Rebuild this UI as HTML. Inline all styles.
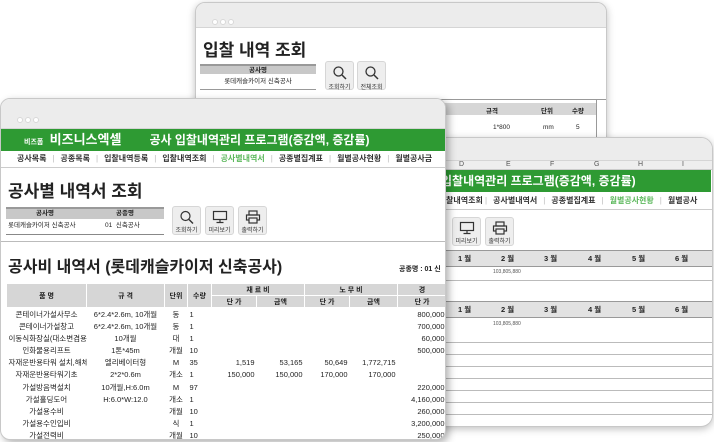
<!DOCTYPE html>
<html><head><meta charset="utf-8"><style>
*{margin:0;padding:0;box-sizing:border-box}
body{width:714px;height:442px;background:#fff;position:relative;overflow:hidden;font-family:"Liberation Sans","Noto Sans CJK KR",sans-serif;color:#222}
.win{position:absolute;background:#fff;border:1px solid #c8c8c8;border-radius:10px;overflow:hidden;box-shadow:0 2px 8px rgba(0,0,0,.25)}
.tb{position:absolute;left:0;right:0;top:0;background:#ececec;border-bottom:1px solid #d5d5d5}
.dots{position:absolute;left:16px;top:9px}
.dots i{display:inline-block;width:6px;height:6px;border-radius:50%;background:#fff;border:1px solid #d8d8d8;margin-right:2px}
.abs{position:absolute}
.green{position:absolute;background:#2e9a33;color:#fff;font-weight:bold;white-space:nowrap}
.nav{position:absolute;font-size:8px;font-weight:bold;color:#333;white-space:nowrap;border-bottom:1px solid #ccc}
.nav span{margin:0 6px}
.nav b{color:#bbb;font-weight:normal}
.btn{position:absolute;width:29px;height:29px;background:#eee;border:1px solid #d6d6d6;border-radius:3px;font-size:6px;text-align:center;color:#333}
.btn svg{display:block;margin:3px auto 1px}
table{border-collapse:collapse;table-layout:fixed}
td{font-size:7.5px;white-space:nowrap;overflow:hidden;height:12.2px;padding:0 2px}
.h td{background:#d6d6d6;font-weight:bold;text-align:center;font-size:7px;border:1px solid #fff}
.r{text-align:right}.c{text-align:center}
</style></head><body>

<!-- Window A (back) -->
<div class="win" style="left:195px;top:2px;width:412px;height:150px">
 <div class="tb" style="height:25px"><div class="dots"><i></i><i></i><i></i></div></div>
 <div class="abs" style="left:7px;top:33px;font-size:17px;font-weight:bold">입찰 내역 조회</div>
 <div class="abs" style="left:4px;top:61px;width:116px;height:10px;background:#c8c8c8;border-top:2px solid #999;font-size:6.5px;font-weight:bold;text-align:center;line-height:9px">공사명</div>
 <div class="abs" style="left:4px;top:73px;width:116px;height:14px;border-bottom:1px solid #999;font-size:6.5px;text-align:center;line-height:12px">롯데캐슬카이저 신축공사</div>
 <div class="btn" style="left:129px;top:58px"><svg width="16" height="16" viewBox="0 0 16 16"><circle cx="6.5" cy="6.5" r="4.5" fill="none" stroke="#333" stroke-width="1.3"/><path d="M10 10l4 4" stroke="#333" stroke-width="1.5"/></svg>조회하기</div>
 <div class="btn" style="left:161px;top:58px"><svg width="16" height="16" viewBox="0 0 16 16"><circle cx="6.5" cy="6.5" r="4.5" fill="none" stroke="#333" stroke-width="1.3"/><path d="M10 10l4 4" stroke="#333" stroke-width="1.5"/></svg>전체조회</div>
 <div class="abs" style="left:0;top:96px;width:412px;height:1px;background:#999"></div>
 <div class="abs" style="left:0;top:100px;width:400px;height:12px;background:#d6d6d6"></div>
 <div class="abs" style="left:290px;top:102px;font-size:6.5px;font-weight:bold">규격</div>
 <div class="abs" style="left:345px;top:102px;font-size:6.5px;font-weight:bold">단위</div>
 <div class="abs" style="left:376px;top:102px;font-size:6.5px;font-weight:bold">수량</div>
 <div class="abs" style="left:297px;top:121px;font-size:6.5px">1*800</div>
 <div class="abs" style="left:347px;top:121px;font-size:6.5px">mm</div>
 <div class="abs" style="left:380px;top:121px;font-size:6.5px">5</div>
 <div class="abs" style="left:400px;top:96px;width:1px;height:60px;background:#999"></div>
</div>

<!-- Window C (right) -->
<div class="win" style="left:400px;top:137px;width:313px;height:290px;border-radius:0 12px 12px 0">
 <div class="tb" style="height:23px"></div>
 <div class="abs" style="left:0;top:23px;width:313px;height:9px;background:#eee;border-bottom:1px solid #ccc;font-size:7px;color:#555">
  <span class="abs" style="left:58px">D</span><span class="abs" style="left:105px">E</span><span class="abs" style="left:149px">F</span><span class="abs" style="left:193px">G</span><span class="abs" style="left:237px">H</span><span class="abs" style="left:281px">I</span></div>
 <div class="green" style="left:0;top:32px;width:310px;height:22px;font-size:12px;line-height:22px;padding-left:40px">입찰내역관리 프로그램(증감액, 증감률)</div>
 <div class="nav" style="left:0;top:54px;width:313px;height:18px;line-height:17px;padding-left:45px">찰내역조회 <b>|</b><span>공사별내역서</span><b>|</b><span>공종별집계표</span><b>|</b><span style="color:#5cb85c">월별공사현황</span><b>|</b><span>월별공사</span></div>
 <div class="btn" style="left:51px;top:79px"><svg width="16" height="14" viewBox="0 0 16 14"><rect x="1.5" y="1.5" width="13" height="8" fill="none" stroke="#333" stroke-width="1.2"/><path d="M8 9.5v3M4.5 12.5h7" stroke="#333" stroke-width="1.2"/></svg>미리보기</div>
 <div class="btn" style="left:84px;top:79px"><svg width="16" height="14" viewBox="0 0 16 14"><rect x="4" y="1" width="8" height="4" fill="none" stroke="#333" stroke-width="1.2"/><rect x="1.5" y="5" width="13" height="5" fill="none" stroke="#333" stroke-width="1.2"/><rect x="4" y="8" width="8" height="5" fill="#eee" stroke="#333" stroke-width="1.2"/></svg>출력하기</div>
 <div class="abs" style="left:0;top:112px;width:313px;height:1px;background:#999"></div>
 <div class="abs" style="left:0;top:113px;width:313px;height:16px;background:#e2e2e2;border-bottom:1px solid #999;font-size:7.5px;font-weight:bold;line-height:15px">
  <span class="abs" style="left:57px">1 월</span><span class="abs" style="left:100px">2 월</span><span class="abs" style="left:143px">3 월</span><span class="abs" style="left:187px">4 월</span><span class="abs" style="left:231px">5 월</span><span class="abs" style="left:274px">6 월</span></div>
 <div class="abs" style="left:92px;top:131px;font-size:5px;color:#555">103,805,880</div>
 <div class="abs" style="left:0;top:142px;width:313px;height:1px;background:#bbb"></div>
 <div class="abs" style="left:0;top:163px;width:313px;height:1px;background:#999"></div>
 <div class="abs" style="left:0;top:164px;width:313px;height:16px;background:#e2e2e2;border-bottom:1px solid #999;font-size:7.5px;font-weight:bold;line-height:15px">
  <span class="abs" style="left:57px">1 월</span><span class="abs" style="left:100px">2 월</span><span class="abs" style="left:143px">3 월</span><span class="abs" style="left:187px">4 월</span><span class="abs" style="left:231px">5 월</span><span class="abs" style="left:274px">6 월</span></div>
 <div class="abs" style="left:92px;top:183px;font-size:5px;color:#555">103,805,880</div>
 <div class="abs" style="left:0;top:193px;width:313px;height:92px;background:repeating-linear-gradient(#fff 0,#fff 11px,#bbb 11px,#bbb 12px)"></div>
</div>

<!-- Window B (front) -->
<div class="win" style="left:0;top:98px;width:446px;height:342px;box-shadow:3px 3px 8px rgba(0,0,0,.3)">
 <div class="tb" style="height:30px"><div class="dots" style="top:11px"><i></i><i></i><i></i></div></div>
 <div class="green" style="left:0;top:30px;width:446px;height:22px;line-height:22px;font-size:12px"><span style="font-size:7px;margin-left:23px">비즈폼</span> <span style="font-size:13px;margin-left:3px">비즈니스엑셀</span><span style="margin-left:28px">공사 입찰내역관리 프로그램(증감액, 증감률)</span></div>
 <div class="nav" style="left:0;top:52px;width:446px;height:17px;line-height:16px;padding-left:10px"><span>공사목록</span><b>|</b><span>공종목록</span><b>|</b><span>입찰내역등록</span><b>|</b><span>입찰내역조회</span><b>|</b><span style="color:#5cb85c">공사별내역서</span><b>|</b><span>공종별집계표</span><b>|</b><span>월별공사현황</span><b>|</b><span>월별공사금</span></div>
 <div class="abs" style="left:7px;top:78px;font-size:17px;font-weight:bold">공사별 내역서 조회</div>
 <div class="abs" style="left:5px;top:108px;width:158px;height:12px;background:#c8c8c8;border-top:2px solid #999;font-size:6.5px;font-weight:bold;line-height:10px"><span class="abs" style="left:30px">공사명</span><span class="abs" style="left:110px">공종명</span></div>
 <div class="abs" style="left:5px;top:120px;width:158px;height:16px;border-bottom:1px solid #888;font-size:6.5px;line-height:14px"><span class="abs" style="left:2px">롯데캐슬카이저 신축공사</span><span class="abs" style="left:99px">01 &nbsp;신축공사</span></div>
 <div class="btn" style="left:171px;top:107px"><svg width="16" height="14" viewBox="0 0 16 14"><circle cx="6.5" cy="6" r="4.5" fill="none" stroke="#333" stroke-width="1.2"/><path d="M10 9.5l4 4" stroke="#333" stroke-width="1.4"/></svg>조회하기</div>
 <div class="btn" style="left:204px;top:107px"><svg width="16" height="14" viewBox="0 0 16 14"><rect x="1.5" y="1.5" width="13" height="8" fill="none" stroke="#333" stroke-width="1.2"/><path d="M8 9.5v3M4.5 12.5h7" stroke="#333" stroke-width="1.2"/></svg>미리보기</div>
 <div class="btn" style="left:237px;top:107px"><svg width="16" height="14" viewBox="0 0 16 14"><rect x="4" y="1" width="8" height="4" fill="none" stroke="#333" stroke-width="1.2"/><rect x="1.5" y="5" width="13" height="5" fill="none" stroke="#333" stroke-width="1.2"/><rect x="4" y="8" width="8" height="5" fill="#eee" stroke="#333" stroke-width="1.2"/></svg>출력하기</div>
 <div class="abs" style="left:0;top:142px;width:446px;height:1px;background:#bbb"></div>
 <div class="abs" style="left:7px;top:154px;font-size:16px;font-weight:bold">공사비 내역서 (롯데캐슬카이저 신축공사)</div>
 <div class="abs" style="left:398px;top:165px;font-size:7px;font-weight:bold">공종명 : 01 신</div>
 <table class="abs" style="left:5px;top:184px;width:440px;border-top:1px solid #777">
  <colgroup><col style="width:80px"><col style="width:78px"><col style="width:23px"><col style="width:24px"><col style="width:45px"><col style="width:48px"><col style="width:45px"><col style="width:48px"><col style="width:49px"></colgroup>
  <tr class="h"><td rowspan="2">품 명</td><td rowspan="2">규 격</td><td rowspan="2">단위</td><td rowspan="2">수량</td><td colspan="2">재 료 비</td><td colspan="2">노 무 비</td><td class="r">경</td></tr>
  <tr class="h"><td>단 가</td><td>금액</td><td>단 가</td><td>금액</td><td>단 가</td></tr>
  <tr><td class="c">콘테이너가설사무소</td><td class="c">6*2.4*2.6m, 10개월</td><td class="c">동</td><td>1</td><td></td><td></td><td></td><td></td><td class="r">800,000</td></tr>
  <tr><td class="c">콘테이너가설창고</td><td class="c">6*2.4*2.6m, 10개월</td><td class="c">동</td><td>1</td><td></td><td></td><td></td><td></td><td class="r">700,000</td></tr>
  <tr><td class="c">이동식화장실(대소변겸용)</td><td class="c">10개월</td><td class="c">대</td><td>1</td><td></td><td></td><td></td><td></td><td class="r">60,000</td></tr>
  <tr><td class="c">인화물용리프트</td><td class="c">1톤*45m</td><td class="c">개월</td><td>10</td><td></td><td></td><td></td><td></td><td class="r">500,000</td></tr>
  <tr><td class="c">자재운반용타워 설치,해체</td><td class="c">엘리베이터형</td><td class="c">M</td><td>35</td><td class="r">1,519</td><td class="r">53,165</td><td class="r">50,649</td><td class="r">1,772,715</td><td></td></tr>
  <tr><td class="c">자재운반용타워기초</td><td class="c">2*2*0.6m</td><td class="c">개소</td><td>1</td><td class="r">150,000</td><td class="r">150,000</td><td class="r">170,000</td><td class="r">170,000</td><td></td></tr>
  <tr><td class="c">가설방음벽설치</td><td class="c">10개월,H:6.0m</td><td class="c">M</td><td>97</td><td></td><td></td><td></td><td></td><td class="r">220,000</td></tr>
  <tr><td class="c">가설홀딩도어</td><td class="c">H:6.0*W:12.0</td><td class="c">개소</td><td>1</td><td></td><td></td><td></td><td></td><td class="r">4,160,000</td></tr>
  <tr><td class="c">가설용수비</td><td></td><td class="c">개월</td><td>10</td><td></td><td></td><td></td><td></td><td class="r">260,000</td></tr>
  <tr><td class="c">가설용수인입비</td><td></td><td class="c">식</td><td>1</td><td></td><td></td><td></td><td></td><td class="r">3,200,000</td></tr>
  <tr><td class="c">가설전력비</td><td></td><td class="c">개월</td><td>10</td><td></td><td></td><td></td><td></td><td class="r">250,000</td></tr>
 </table>
</div>
</body></html>
